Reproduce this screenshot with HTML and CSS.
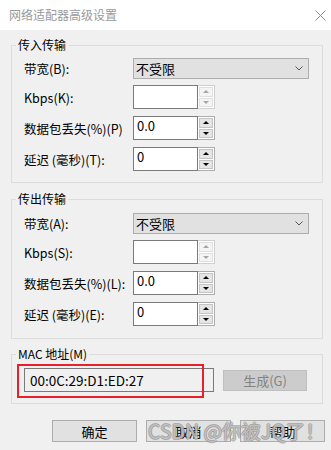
FILE: index.html
```html
<!DOCTYPE html>
<html lang="zh-CN">
<head>
    <meta charset="UTF-8">
    <title>网络适配器高级设置</title>
    <link rel="stylesheet" href="styles.css">
</head>
<body>
    <div class="dialog">
        <div class="titlebar">
            <span class="title">网络适配器高级设置</span>
            <svg class="close" width="11" height="11" viewBox="0 0 11 11"><path d="M0.5 0.5 L10.5 10.5 M10.5 0.5 L0.5 10.5" stroke="#8f8f8f" stroke-width="1" fill="none"/></svg>
        </div>

        <fieldset class="group first">
            <legend>传入传输</legend>
            <div class="rows">
                <span class="lbl">带宽(B):</span>
                <div class="combo"><span>不受限</span><svg width="8" height="5" viewBox="0 0 8 5"><path d="M0.5 0.5 L4 4 L7.5 0.5" stroke="#555" fill="none"/></svg></div>
                <span class="lbl">Kbps(K):</span>
                <div class="spin off"><div class="spin-field"></div><div class="spin-btns"><span class="up"></span><span class="down"></span></div></div>
                <span class="lbl">数据包丢失(%)(P)</span>
                <div class="spin"><div class="spin-field">0.0</div><div class="spin-btns"><span class="up"></span><span class="down"></span></div></div>
                <span class="lbl">延迟 (毫秒)(T):</span>
                <div class="spin"><div class="spin-field">0</div><div class="spin-btns"><span class="up"></span><span class="down"></span></div></div>
            </div>
        </fieldset>

        <fieldset class="group second">
            <legend>传出传输</legend>
            <div class="rows">
                <span class="lbl">带宽(A):</span>
                <div class="combo"><span>不受限</span><svg width="8" height="5" viewBox="0 0 8 5"><path d="M0.5 0.5 L4 4 L7.5 0.5" stroke="#555" fill="none"/></svg></div>
                <span class="lbl">Kbps(S):</span>
                <div class="spin off"><div class="spin-field"></div><div class="spin-btns"><span class="up"></span><span class="down"></span></div></div>
                <span class="lbl">数据包丢失(%)(L):</span>
                <div class="spin"><div class="spin-field">0.0</div><div class="spin-btns"><span class="up"></span><span class="down"></span></div></div>
                <span class="lbl">延迟 (毫秒)(E):</span>
                <div class="spin"><div class="spin-field">0</div><div class="spin-btns"><span class="up"></span><span class="down"></span></div></div>
            </div>
        </fieldset>

        <fieldset class="group mac">
            <legend>MAC 地址(M)</legend>
            <div class="mac-row">
                <div class="mac-field">00:0C:29:D1:ED:27<span class="mark"></span></div>
                <button class="btn disabled">生成(G)</button>
            </div>
        </fieldset>

        <div class="footer">
            <button class="btn">确定</button>
            <button class="btn">取消</button>
            <button class="btn">帮助</button>
            <span class="watermark">CSDN @你被JQ了！</span>
        </div>
    </div>
</body>
</html>
```

FILE: styles.css
```css
*{
    margin: 0px;
    padding: 0px;
    box-sizing: border-box;
    font-family: "Noto Sans CJK SC", sans-serif;
}
body{
    background-color: #f0f0f0;
    width: 331px;
    height: 450px;
    overflow: hidden;
}
.titlebar{
    height: 30px;
    background-color: #ffffff;
    display: flex;
    align-items: center;
    justify-content: space-between;
    padding: 0px 5px 0px 9px;
}
.title{
    font-size: 12px;
    color: #999999;
    line-height: 16px;
}
.group{
    border: 1px solid #dcdcdc;
    margin: 7px 8px 0px 11px;
    padding: 5px 13px 11px 12px;
}
.group legend{
    font-size: 12px;
    line-height: 16px;
    padding: 0px 2px;
    margin-left: -8px;
    color: #000;
}
.second{
    margin-top: 8px;
    padding-top: 6px;
    padding-bottom: 12px;
}
.rows{
    display: grid;
    grid-template-columns: 109px 1fr;
    row-gap: 7px;
    align-items: center;
}
.lbl{
    font-size: 12.5px;
    color: #000;
    white-space: nowrap;
}
.combo{
    height: 21px;
    margin-bottom: -1px;
    background-color: #e1e1e1;
    border: 1px solid #adadad;
    display: flex;
    align-items: center;
    justify-content: space-between;
    padding: 0px 5px 0px 2px;
    font-size: 13px;
}
.spin{
    display: flex;
    width: 82px;
    height: 24px;
}
.spin-field{
    flex: 1;
    background-color: #ffffff;
    border: 1px solid #7a7a7a;
    font-size: 13px;
    line-height: 16px;
    padding: 1px 3px;
}
.spin-btns{
    width: 17px;
    border: 1px solid #adadad;
    border-left: none;
    background-color: #ffffff;
    display: flex;
    flex-direction: column;
    padding: 1px;
    gap: 1px;
}
.spin-btns span{
    flex: 1;
    background-color: #e5e5e5;
    border: 1px solid #c4c4c4;
    display: flex;
    align-items: center;
    justify-content: center;
}
.spin-btns .up::after{
    content: "";
    border-left: 3px solid transparent;
    border-right: 3px solid transparent;
    border-bottom: 3px solid #000;
}
.spin-btns .down::after{
    content: "";
    border-left: 3px solid transparent;
    border-right: 3px solid transparent;
    border-top: 3px solid #000;
}
.off .spin-btns{
    border-color: #cfcfcf;
}
.off .spin-btns span{
    background-color: #f4f4f4;
    border-color: #e0e0e0;
}
.off .spin-btns .up::after{
    border-bottom-color: #a6a6a6;
}
.off .spin-btns .down::after{
    border-top-color: #a6a6a6;
}
.mac{
    padding-top: 6px;
}
.mac-row{
    display: flex;
    align-items: center;
    gap: 9px;
}
.mac-field{
    position: relative;
    width: 190px;
    height: 24px;
    border: 1px solid #7a7a7a;
    background-color: #f0f0f0;
    font-size: 13.5px;
    line-height: 20px;
    padding: 1px 5px;
    color: #000;
}
.mark{
    position: absolute;
    left: -8px;
    top: -5px;
    width: 187px;
    height: 34px;
    border: 2px solid #e8202a;
}
.btn{
    width: 85px;
    height: 22px;
    background-color: #e1e1e1;
    border: 1px solid #adadad;
    font-size: 13px;
    color: #000;
}
.btn.disabled{
    width: 84px;
    height: 21px;
    background-color: #cccccc;
    border-color: #bfbfbf;
    color: #838383;
}
.footer{
    position: relative;
    display: flex;
    gap: 9px;
    margin-top: 16px;
    padding-left: 52px;
}
.watermark{
    position: absolute;
    left: 148px;
    top: -3px;
    font-size: 19.5px;
    line-height: 28px;
    white-space: nowrap;
    color: rgba(255, 255, 255, 0.45);
    text-shadow: 1px 0 0 rgba(130, 130, 130, 0.55), -1px 0 0 rgba(130, 130, 130, 0.55), 0 1px 0 rgba(130, 130, 130, 0.55), 0 -1px 0 rgba(130, 130, 130, 0.55);
}
```
